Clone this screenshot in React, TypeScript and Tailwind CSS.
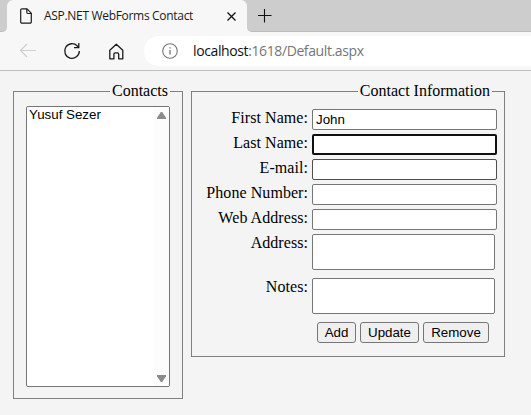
import type { ReactNode } from "react";

function TabBar() {
  return (
    <div className="flex h-8 bg-[#cdcdcd]">
      <div className="h-8 w-[7px] bg-[#f7f7f7]">
        <div className="h-8 w-[7px] rounded-br-[5px] border-b border-[#bdbdbd] bg-[#cdcdcd]" />
      </div>
      <div className="flex h-8 w-60 items-center rounded-t-[6px] bg-[#f7f7f7] pl-[13px]">
        <svg width="12" height="16" viewBox="0 0 12 16" fill="none" stroke="#1b1b1b" strokeWidth="1.2">
          <path d="M2 .8h5l4.3 4.4v8.6a1.3 1.3 0 0 1-1.3 1.4H2A1.3 1.3 0 0 1 .7 13.8V2.1A1.3 1.3 0 0 1 2 .8z" />
          <path d="M6.8 1v3.3a1.2 1.2 0 0 0 1.2 1.2h3.300" />
        </svg>
        <span className="ml-3 w-[160px] whitespace-nowrap font-['Open_Sans',sans-serif] text-[12px] leading-4 tracking-[-0.31px] text-[#1b1b1b]">
          ASP.NET WebForms Contact
        </span>
        <svg className="ml-[23px] mt-px" width="9" height="9" viewBox="0 0 9 9" stroke="#111" strokeWidth="1.3">
          <path d="M.5.5l8 8M8.500.5l-8 8" />
        </svg>
      </div>
      <div className="h-8 flex-1 bg-[#f7f7f7]">
        <div className="h-8 rounded-bl-[5px] border-b border-[#bdbdbd] bg-[#cdcdcd] pl-[10px] pt-[8px]">
          <svg width="15" height="15" viewBox="0 0 15 15" stroke="#111" strokeWidth="1.1">
            <path d="M1 7.500h13.500M7.500 1v13.500" />
          </svg>
        </div>
      </div>
    </div>
  );
}

function Toolbar() {
  return (
    <div className="flex h-[39px] items-center border-b border-[#bebebe] bg-[#f7f7f7] pl-[19px]">
      <svg width="18" height="16" viewBox="0 0 18 16" fill="none" stroke="#cfcfcf" strokeWidth="1.2">
        <path d="M17 7.500H1.500M8 1L1.500 7.500L8 14" />
      </svg>
      <svg className="ml-[26px]" width="18" height="18" viewBox="0 0 18 18" fill="none" stroke="#1b1b1b" strokeWidth="1.3">
        <path d="M16.300 9A7.300 7.300 0 1 1 14.300 4L15.700 5.500" />
        <path d="M15.800 1v4.700h-4.800" />
      </svg>
      <svg className="ml-[28px]" width="15" height="17" viewBox="0 0 15 17" fill="none" stroke="#1b1b1b" strokeWidth="1.3" strokeLinejoin="round">
        <path d="M.8 7.200L7.300 1.300l6.500 5.900v8.600H9.700v-4.600a1.300 1.300 0 0 0-1.300-1.300H6.200a1.300 1.300 0 0 0-1.300 1.300v4.600H.8z" />
      </svg>
      <div className="ml-5 flex h-[30px] flex-1 items-center rounded-l-full bg-white pl-[18px]">
        <svg width="16" height="16" viewBox="0 0 16 16" fill="none" stroke="#767676" strokeWidth="1.1">
          <circle cx="8" cy="8" r="7.300" />
          <path d="M8 7v4.500M8 4.300v1.300" strokeWidth="1.3" />
        </svg>
        <span className="ml-[15px] whitespace-nowrap font-['Open_Sans',sans-serif] text-[14px] leading-5 tracking-[-0.39px] text-[#767676]">
          <span className="text-[#111]">localhost</span>:1618/Default.aspx
        </span>
      </div>
    </div>
  );
}

function Row({ label, tall, children }: { label: string; tall?: boolean; children: ReactNode }) {
  return (
    <div className={tall ? "flex h-11 items-start" : "flex h-[25px] items-start"}>
      <div className="w-[116px] whitespace-nowrap text-right text-[16px] leading-[18px] tracking-[0.06px]">{label}</div>
      <div className="ml-1 flex">{children}</div>
    </div>
  );
}

const field =
  "block h-[21px] w-[185px] rounded-[2px] border border-[#767676] bg-white px-[3px] font-['Liberation_Sans',sans-serif] text-[13.333px] leading-4 text-black outline-none";
const area = "block h-9 w-[183px] resize-none rounded-[2px] border border-[#767676] bg-white outline-none";
const button =
  "h-[21px] rounded-[3px] border border-[#767676] bg-[#efefef] text-center font-['Liberation_Sans',sans-serif] text-[13.333px] leading-[19px] text-black";

export default function App() {
  return (
    <div className="h-[415px] w-[531px] overflow-hidden bg-[#f4f4f4] font-['Liberation_Serif',serif] text-black">
      <TabBar />
      <Toolbar />
      <div className="flex items-start gap-2 pl-[13px] pt-[11px]">
        <fieldset className="h-[317px] w-[170px] border border-[#808080] pl-3 pr-3">
          <legend className="ml-auto px-[2px] text-[16px] leading-[18px]">Contacts</legend>
          <div className="mt-[6px] flex h-[281px] w-36 justify-between rounded-[2px] border border-[#767676] bg-white">
            <div className="pl-[2px] font-['Liberation_Sans',sans-serif] text-[13.333px] leading-[15px]">Yusuf Sezer</div>
            <div className="flex w-[15px] flex-col items-center justify-between bg-[#fcfcfc] pb-1 pt-[5px]">
              <svg width="9" height="7" viewBox="0 0 9 7" fill="#8b8b8b">
                <path d="M3.800 0h1.400L9 5.800V7H0V5.800z" />
              </svg>
              <svg width="9" height="7" viewBox="0 0 9 7" fill="#8b8b8b">
                <path d="M3.800 7h1.400L9 1.200V0H0v1.200z" />
              </svg>
            </div>
          </div>
        </fieldset>
        <fieldset className="h-[275px] w-[314px] border border-[#808080]">
          <legend className="ml-auto mr-3 px-[2px] text-[16px] leading-[18px]">Contact Information</legend>
          <div className="pt-[9px]">
            <Row label="First Name:"><input className={field} defaultValue="John" /></Row>
            <Row label="Last Name:"><input className={`${field} border-2! border-[#101010]!`} /></Row>
            <Row label="E-mail:"><input className={`${field} border-[#4f4f4f]!`} /></Row>
            <Row label="Phone Number:"><input className={field} /></Row>
            <Row label="Web Address:"><input className={field} /></Row>
            <Row label="Address:" tall><textarea className={area} /></Row>
            <Row label="Notes:" tall><textarea className={area} /></Row>
            <div className="flex gap-1 pl-[125px]">
              <button className={`${button} w-[39px]`}>Add</button>
              <button className={`${button} w-[59px]`}>Update</button>
              <button className={`${button} w-[66px]`}>Remove</button>
            </div>
          </div>
        </fieldset>
      </div>
    </div>
  );
}
